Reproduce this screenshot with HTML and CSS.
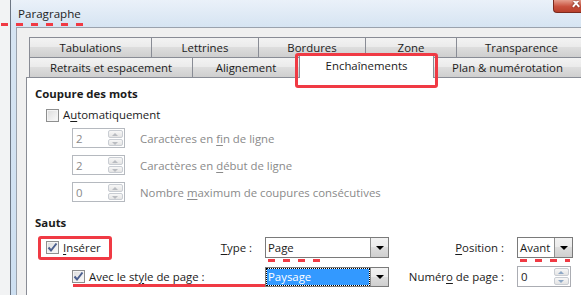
FILE: index.html
```html
<!DOCTYPE html>
<html lang="fr">
<head>
    <meta charset="UTF-8">
    <title>Paragraphe</title>
    <link rel="stylesheet" href="styles.css">
</head>
<body>
    <div class="screen">
        <div class="frame">
            <div class="titlebar">
                <span class="title">Paragraphe</span>
                <span class="close"><svg width="10" height="8" viewBox="0 0 10 8"><path d="M1 -2 L8 6 M8 -2 L1 6" stroke="#fff" stroke-width="2.2"/></svg></span>
            </div>
            <div class="dialog">
                <div class="tabs">
                    <div class="tab-row">
                        <div class="tab" style="width: 123px">Tabulations</div>
                        <div class="tab" style="width: 108px">Lettrines</div>
                        <div class="tab" style="width: 108px">Bordures</div>
                        <div class="tab" style="width: 92px">Zone</div>
                        <div class="tab" style="width: 131px">Transparence</div>
                    </div>
                    <div class="tab-row">
                        <div class="tab" style="width: 164px">Retraits et espacement</div>
                        <div class="tab" style="width: 108px">Alignement</div>
                        <div class="tab selected" style="width: 135px">Enchaînements</div>
                        <div class="tab" style="width: 149px">Plan &amp; numérotation</div>
                    </div>
                </div>

                <div class="panel">
                    <div class="heading">Coupure des mots</div>
                    <label class="check-row">
                        <span class="checkbox"></span>
                        <span>A<u>u</u>tomatiquement</span>
                    </label>

                    <div class="spin-row">
                        <div class="spinner disabled"><span>2</span><span class="spin-btn"><i class="up"></i><i class="down"></i></span></div>
                        <span class="muted">Caractères en <u>f</u>in de ligne</span>
                    </div>
                    <div class="spin-row">
                        <div class="spinner disabled"><span>2</span><span class="spin-btn"><i class="up"></i><i class="down"></i></span></div>
                        <span class="muted">Caractères en <u>d</u>ébut de ligne</span>
                    </div>
                    <div class="spin-row">
                        <div class="spinner disabled"><span>0</span><span class="spin-btn"><i class="up"></i><i class="down"></i></span></div>
                        <span class="muted">Nombre <u>m</u>aximum de coupures consécutives</span>
                    </div>

                    <div class="heading sauts">Sauts</div>
                    <div class="break-grid">
                        <div class="cell-split">
                            <label class="check-row boxed">
                                <span class="checkbox checked"><svg width="11" height="11" viewBox="0 0 11 11"><path d="M1.5 5.5 L4 8.5 L9.5 1.5" fill="none" stroke="#4b5f8e" stroke-width="2"/></svg></span>
                                <span><u>I</u>nsérer</span>
                            </label>
                            <span class="field-label"><u>T</u>ype :</span>
                        </div>
                        <div class="combo dashed">
                            <span class="combo-value">Page</span>
                            <span class="combo-btn"><i></i></span>
                        </div>
                        <span class="field-label"><u>P</u>osition :</span>
                        <div class="combo dashed">
                            <span class="combo-value">Avant</span>
                            <span class="combo-btn"><i></i></span>
                        </div>

                        <div>
                            <label class="check-row nested underlined">
                                <span class="checkbox checked"><svg width="11" height="11" viewBox="0 0 11 11"><path d="M1.5 5.5 L4 8.5 L9.5 1.5" fill="none" stroke="#4b5f8e" stroke-width="2"/></svg></span>
                                <span>Avec le st<u>y</u>le de page :</span>
                            </label>
                        </div>
                        <div class="combo focused">
                            <span class="combo-value">Paysage</span>
                            <span class="combo-btn"><i></i></span>
                        </div>
                        <span class="field-label">Numér<u>o</u> de page :</span>
                        <div class="spinner"><span>0</span><span class="spin-btn"><i class="up"></i><i class="down"></i></span></div>
                    </div>
                </div>
            </div>
        </div>
    </div>
</body>
</html>
```

FILE: styles.css
```css
body {
    margin: 0;
    font-family: "Open Sans", "Noto Sans", sans-serif;
    font-size: 11.4px;
    color: #1b1b1b;
}

u {
    text-decoration: underline;
    text-underline-offset: 2px;
}

.screen {
    width: 581px;
    height: 295px;
    overflow: hidden;
    background: #f2f3f4;
}

.frame {
    margin-left: 10px;
    height: 100%;
    border-left: 1px solid #6c7684;
    background: linear-gradient(to bottom, #eaf1f9 0, #d6e4f2 27px, #cddff1 100%);
    display: flex;
    flex-direction: column;
}

.titlebar {
    height: 27px;
    display: flex;
    align-items: flex-start;
}

.title {
    margin: 6px 0 0 7px;
    font-size: 11.6px;
    color: #1e1e1e;
    position: relative;
}

/* red dashed marker under the title */
.title::after {
    content: "";
    position: absolute;
    left: -17px;
    right: -6px;
    top: 17px;
    height: 3px;
    background: repeating-linear-gradient(to right, #f03a44 0 7px, transparent 7px 15px);
}

.close {
    margin-left: auto;
    width: 28px;
    height: 13px;
    box-sizing: border-box;
    padding: 1px 0 0 18px;
    border: 1px solid #7b2a1e;
    border-top: none;
    border-right: none;
    border-radius: 0 0 0 4px;
    background: linear-gradient(to bottom, #e59d8d, #c9513e 55%, #b8402c);
    display: flex;
    align-items: flex-start;
}

.close svg {
    filter: drop-shadow(0 0 1px #5a1208);
}

.dialog {
    flex: 1;
    margin-left: 5px;
    border-left: 1px solid #9aa2ad;
    border-top: 1px solid #9aa2ad;
    background: #f0f0f0;
    display: flex;
    flex-direction: column;
}

.tabs {
    padding: 9px 0 0 12px;
    position: relative;
    z-index: 1;
}

.tab-row {
    display: flex;
    align-items: flex-end;
    white-space: nowrap;
}

.tab {
    flex: none;
    box-sizing: border-box;
    height: 20px;
    margin-left: -1px;
    border: 1px solid #898c95;
    border-bottom: none;
    background: linear-gradient(to bottom, #f3f3f3 0, #ebebeb 45%, #dddddd 50%, #cfcfcf 100%);
    text-align: center;
    line-height: 19px;
    color: #1b1b1b;
}

.tab:first-child {
    margin-left: 0;
}

.tab.selected {
    height: 23px;
    margin-top: -2px;
    margin-bottom: -1px;
    background: #fff;
    line-height: 20px;
    position: relative;
    z-index: 2;
}

/* red highlight box around the active tab */
.tab.selected::after {
    content: "";
    position: absolute;
    left: -5px;
    right: -5px;
    top: -3px;
    bottom: -10px;
    border: 3px solid #f03a44;
    border-radius: 3px;
}

.panel {
    flex: 1;
    margin-left: 9px;
    border-left: 1px solid #898c95;
    border-top: 1px solid #898c95;
    background: #fff;
    padding: 8px 0 0 8px;
}

.heading {
    font-weight: bold;
    line-height: 16px;
}

.sauts {
    margin-top: 13px;
}

.check-row {
    display: flex;
    align-items: center;
    gap: 4px;
    line-height: 16px;
    margin: 5px 0 0 11px;
}

.checkbox {
    width: 13px;
    height: 13px;
    box-sizing: border-box;
    border: 1px solid #8e8f8f;
    background: linear-gradient(135deg, #dcdcdc, #fbfbfb);
    box-shadow: inset 0 0 0 1px #f4f4f4;
    display: flex;
    align-items: center;
    justify-content: center;
}

.spin-row {
    display: flex;
    align-items: center;
    gap: 15px;
    margin: 5px 0 0 37px;
}

.spin-row + .spin-row {
    margin-top: 7px;
}

.spinner {
    width: 54px;
    height: 21px;
    box-sizing: border-box;
    border: 1px solid #abadb3;
    background: #fff;
    display: flex;
    align-items: center;
    justify-content: space-between;
    padding: 1px 1px 1px 3px;
}

.spinner.disabled {
    width: 53px;
    height: 20px;
    border-color: #b5b9bf;
    color: #8a8a8a;
}

.spin-btn {
    width: 15px;
    height: 100%;
    display: flex;
    flex-direction: column;
    gap: 1px;
}

.spin-btn i {
    flex: 1;
    border: 1px solid #c9cdd3;
    border-radius: 2px;
    background: linear-gradient(to bottom, #f7f7f7, #e4e4e4);
    position: relative;
}

.spin-btn i::after {
    content: "";
    position: absolute;
    left: 3px;
    top: 2px;
    border-left: 3px solid transparent;
    border-right: 3px solid transparent;
}

.spin-btn .up::after {
    border-bottom: 3px solid #8ea8c6;
}

.spin-btn .down::after {
    border-top: 3px solid #8ea8c6;
}

.spinner.disabled .spin-btn i::after {
    border-bottom-color: #b9bcc1;
    border-top-color: #b9bcc1;
}

.muted {
    color: #8a8a8a;
}

.break-grid {
    display: grid;
    grid-template-columns: 217px 124px 102px 56px;
    column-gap: 13px;
    row-gap: 8px;
    align-items: center;
    margin-top: 6px;
}

.cell-split {
    display: flex;
    justify-content: space-between;
    align-items: center;
}

.field-label {
    text-align: right;
    white-space: nowrap;
}

.check-row.boxed {
    margin: -2px 0 -2px 3px;
    padding: 1px 8px 1px 5px;
    border: 3px solid #f03a44;
    border-radius: 3px;
}

.check-row.nested {
    margin: 0 0 0 37px;
    position: relative;
    white-space: nowrap;
}

/* red underline that runs under the label and the combo */
.check-row.underlined::after {
    content: "";
    position: absolute;
    left: 1px;
    width: 257px;
    top: 15px;
    height: 3px;
    background: #f03a44;
}

.combo {
    height: 21px;
    box-sizing: border-box;
    border: 1px solid #7a7a7a;
    background: #fff;
    display: flex;
    position: relative;
}

.combo-value {
    flex: 1;
    line-height: 19px;
    padding-left: 2px;
}

.combo-btn {
    width: 17px;
    border-left: 1px solid #8e8f8f;
    background: linear-gradient(to bottom, #f2f2f2, #ebebeb 50%, #dddddd 50%, #cfcfcf);
    display: flex;
    align-items: center;
    justify-content: center;
}

.combo-btn i {
    border-left: 4px solid transparent;
    border-right: 4px solid transparent;
    border-top: 4px solid #000;
}

.combo.focused {
    height: 20px;
}

.combo.focused .combo-value {
    margin: 1px;
    padding-left: 1px;
    line-height: 16px;
    background: #3399ff;
    color: #fff;
    outline: 1px dotted #000;
}

/* red dashed marker under a value */
.combo.dashed::after {
    content: "";
    position: absolute;
    left: 2px;
    width: 52px;
    max-width: calc(100% - 4px);
    bottom: -5px;
    height: 3px;
    background: repeating-linear-gradient(to right, #f03a44 0 7px, transparent 7px 15px);
}
```
